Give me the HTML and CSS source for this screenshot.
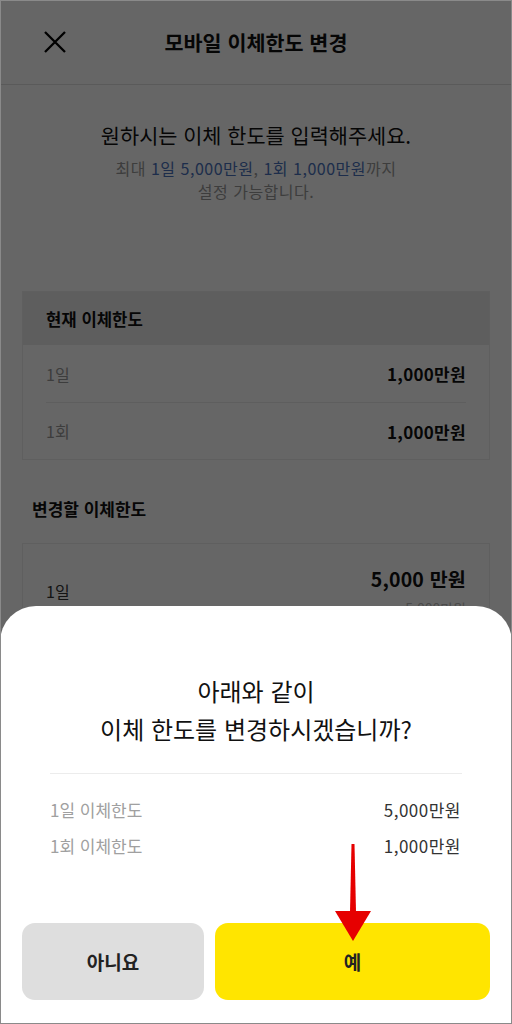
FILE: index.html
```html
<!DOCTYPE html>
<html lang="ko">
<head>
<meta charset="utf-8">
<link rel="stylesheet" href="styles.css">
</head>
<body>
<div class="screen">
  <header class="topbar">
    <div class="close">
      <svg width="22" height="22" viewBox="0 0 22 22"><path d="M1 1L21 21M21 1L1 21" stroke="#000" stroke-width="2.3" fill="none"/></svg>
    </div>
    <h1 class="title">모바일 이체한도 변경</h1>
    <div></div>
  </header>

  <section class="intro">
    <p class="lead">원하시는 이체 한도를 입력해주세요.</p>
    <p class="sub">최대 <span class="hl">1일 5,000만원</span>, <span class="hl">1회 1,000만원</span>까지</p>
    <p class="sub">설정 가능합니다.</p>
  </section>

  <section class="card">
    <div class="card-head">현재 이체한도</div>
    <div class="row"><span class="lbl">1일</span><span class="val">1,000만원</span></div>
    <div class="row sep"><span class="lbl">1회</span><span class="val">1,000만원</span></div>
  </section>

  <h2 class="section-title">변경할 이체한도</h2>

  <section class="card card2">
    <div class="row input-row">
      <span class="lbl dark">1일</span>
      <div class="input-val">
        <span class="big">5,000 만원</span>
        <span class="hint">5,000만원</span>
      </div>
    </div>
  </section>

  <div class="dim"></div>

  <div class="sheet">
    <p class="sheet-title">아래와 같이<br>이체 한도를 변경하시겠습니까?</p>
    <div class="sheet-list">
      <div class="srow"><span class="slbl">1일 이체한도</span><span class="sval">5,000만원</span></div>
      <div class="srow"><span class="slbl">1회 이체한도</span><span class="sval">1,000만원</span></div>
    </div>
    <div class="btns">
      <button class="btn no">아니요</button>
      <button class="btn yes">예</button>
    </div>
  </div>

  <svg class="arrow" width="40" height="100" viewBox="0 0 40 100">
    <polygon points="16.5,0 19.5,0 21,68 15,68" fill="#e60000"/>
    <polygon points="0,67 36,67 18,97" fill="#e60000"/>
  </svg>
</div>
</body>
</html>
```

FILE: styles.css
```css
* { box-sizing: border-box; margin: 0; padding: 0; }
html, body { width: 512px; height: 1024px; }
body {
  font-family: "Noto Sans CJK KR", "Noto Sans", sans-serif;
  color: #111;
  background: #fff;
  overflow: hidden;
}
.screen {
  position: relative;
  width: 512px;
  height: 1024px;
  overflow: hidden;
  background: #fff;
}
.screen::after {
  content: "";
  position: absolute;
  inset: 0;
  border: 1px solid #8a8a8a;
  pointer-events: none;
  z-index: 10;
}
.topbar {
  height: 85px;
  border-bottom: 1px solid #e2e2e2;
  display: grid;
  grid-template-columns: 1fr auto 1fr;
  align-items: center;
}
.close { padding-left: 44px; display: flex; align-items: center; height: 22px; margin-top: -1px; }
.close svg { display: block; }
.title { font-size: 20.7px; font-weight: 700; line-height: 28px; color: #111; }

.intro { text-align: center; padding-top: 36px; }
.lead { font-size: 20.8px; line-height: 28px; color: #111; margin-bottom: 8px; }
.sub { font-size: 16px; line-height: 23px; letter-spacing: 0.5px; color: #999; }
.hl { color: #4a72bb; }

.card {
  margin: 88px 22px 0;
  border: 1px solid #eeeeee;
  background: #fff;
}
.card-head {
  height: 53px;
  background: #ececec;
  display: flex;
  align-items: center;
  padding-left: 23px;
  font-size: 16.7px;
  font-weight: 700;
}
.row {
  margin: 0 23px;
  height: 57px;
  display: flex;
  align-items: center;
  justify-content: space-between;
  font-size: 16px;
}
.row.sep { border-top: 1px solid #eaeaea; }
.lbl { color: #999; }
.lbl.dark { color: #333; font-size: 16px; }
.val { font-weight: 700; color: #111; font-size: 17px; letter-spacing: 0.3px; }

.section-title {
  margin: 37px 0 0 32px;
  font-size: 17px;
  font-weight: 700;
  line-height: 24px;
}
.card2 { margin-top: 22px; }
.input-row { height: 100px; align-items: flex-start; padding-top: 33px; }
.input-row .lbl { margin-top: 2px; }
.input-val { display: flex; flex-direction: column; align-items: flex-end; margin-top: -12px; }
.big { font-size: 19.5px; font-weight: 700; line-height: 28px; letter-spacing: 0.2px; }
.hint { font-size: 14px; color: #bbb; line-height: 18px; margin-top: 6px; }

.dim {
  position: absolute;
  inset: 0;
  background: rgba(0, 0, 0, 0.6);
  z-index: 2;
}

.sheet {
  position: absolute;
  left: 0;
  right: 0;
  bottom: 0;
  z-index: 3;
  background: #fff;
  border-radius: 36px 36px 0 0;
  padding: 66px 22px 24px;
}
.sheet-title {
  text-align: center;
  font-size: 24px;
  line-height: 38px;
  color: #111;
}
.sheet-list {
  margin: 25px 28px 0;
  border-top: 1px solid #ececec;
  padding-top: 17px;
}
.srow {
  height: 36px;
  display: flex;
  align-items: center;
  justify-content: space-between;
  font-size: 17px;
}
.slbl { color: #a0a0a0; }
.sval { color: #333; padding-right: 1px; letter-spacing: 0.5px; }
.btns {
  margin-top: 60px;
  display: grid;
  grid-template-columns: 182px 1fr;
  gap: 11px;
}
.btn {
  height: 77px;
  border: 0;
  border-radius: 13px;
  font-family: "Noto Sans CJK KR", "Noto Sans", sans-serif;
  font-size: 19px;
  font-weight: 700;
  color: #222;
}
.btn.no { background: #dedede; }
.btn.yes { background: #ffe500; }

.arrow {
  position: absolute;
  left: 335px;
  top: 844px;
  z-index: 5;
}
```
